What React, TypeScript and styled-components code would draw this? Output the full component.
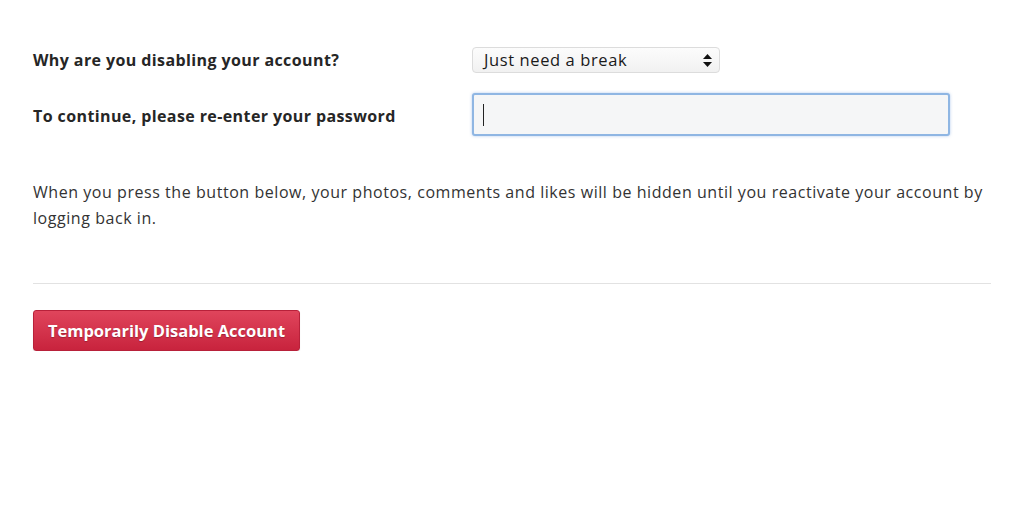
import React from 'react';
import styled, { createGlobalStyle } from 'styled-components';

const GlobalStyle = createGlobalStyle`
  html, body {
    margin: 0;
    padding: 0;
    background: #fff;
  }
  body {
    font-family: "Open Sans", "Noto Sans", sans-serif;
    color: #262626;
  }
`;

const Page = styled.div`
  width: 958px;
  padding: 40px 0 0 33px;
`;

const Form = styled.form`
  display: flex;
  flex-direction: column;
`;

const Row = styled.div<{ $height: number }>`
  display: grid;
  grid-template-columns: 439px 1fr;
  align-items: center;
  height: ${({ $height }) => $height}px;
`;

const Label = styled.label`
  font-size: 16px;
  font-weight: 700;
  letter-spacing: 0.4px;
  color: #262626;
`;

const SelectBox = styled.div`
  position: relative;
  width: 248px;
  height: 26px;
  box-sizing: border-box;
  margin-top: -1px;
  border: 1px solid #dcdcdc;
  border-radius: 4px;
  background: linear-gradient(#fcfcfc, #f1f1f1);
  display: flex;
  align-items: center;
  padding: 0 11px;
  font-size: 16.5px;
  letter-spacing: 0.6px;
  color: #1a1a1a;
`;

const Arrows = styled.svg`
  position: absolute;
  right: 7px;
  top: 6px;
`;

const PasswordInput = styled.input`
  width: 478px;
  height: 43px;
  box-sizing: border-box;
  border: 2px solid #8fb6e3;
  border-radius: 3px;
  background: #f5f6f7;
  box-shadow: 0 0 3px rgba(100, 150, 220, 0.5);
  padding: 0 10px;
  font-size: 16px;
  outline: none;
`;

const Caret = styled.span`
  display: block;
  width: 1px;
  height: 22px;
  background: #222;
`;

const InputWrap = styled.div`
  position: relative;
  width: 478px;
  margin-top: -4px;

  ${Caret} {
    position: absolute;
    left: 11px;
    top: 11px;
  }
`;

const Notice = styled.p`
  margin: 27px 0 0;
  font-size: 16px;
  line-height: 26px;
  letter-spacing: 0.55px;
  color: #333;
`;

const Divider = styled.hr`
  margin: 52px 0 0;
  border: 0;
  border-top: 1px solid #e2e2e2;
  width: 958px;
`;

const DangerButton = styled.button`
  margin-top: 26px;
  width: 267px;
  height: 41px;
  border: 1px solid #b8213a;
  border-radius: 3px;
  background: linear-gradient(#e0455c, #c8233d);
  color: #fff;
  font-family: "Open Sans", sans-serif;
  font-weight: 700;
  font-size: 16.5px;
  text-shadow: 0 1px 1px rgba(0, 0, 0, 0.25);
  box-shadow: 0 1px 1px rgba(0, 0, 0, 0.15);
  cursor: pointer;
  padding: 0;
`;

export default function App() {
  return (
    <Page>
      <GlobalStyle />
      <Form onSubmit={e => e.preventDefault()}>
        <Row $height={40}>
          <Label>Why are you disabling your account?</Label>
          <SelectBox>
            Just need a break
            <Arrows width="9" height="13" viewBox="0 0 9 13">
              <path d="M4.5 0 L9 5 L0 5 Z" fill="#111" />
              <path d="M0 8 L9 8 L4.5 13 Z" fill="#111" />
            </Arrows>
          </SelectBox>
        </Row>
        <Row $height={72}>
          <Label>To continue, please re-enter your password</Label>
          <InputWrap>
            <PasswordInput type="password" />
            <Caret />
          </InputWrap>
        </Row>
        <Notice>
          When you press the button below, your photos, comments and likes will be hidden until you reactivate
          your account by logging back in.
        </Notice>
      </Form>
      <Divider />
      <DangerButton>Temporarily Disable Account</DangerButton>
    </Page>
  );
}
